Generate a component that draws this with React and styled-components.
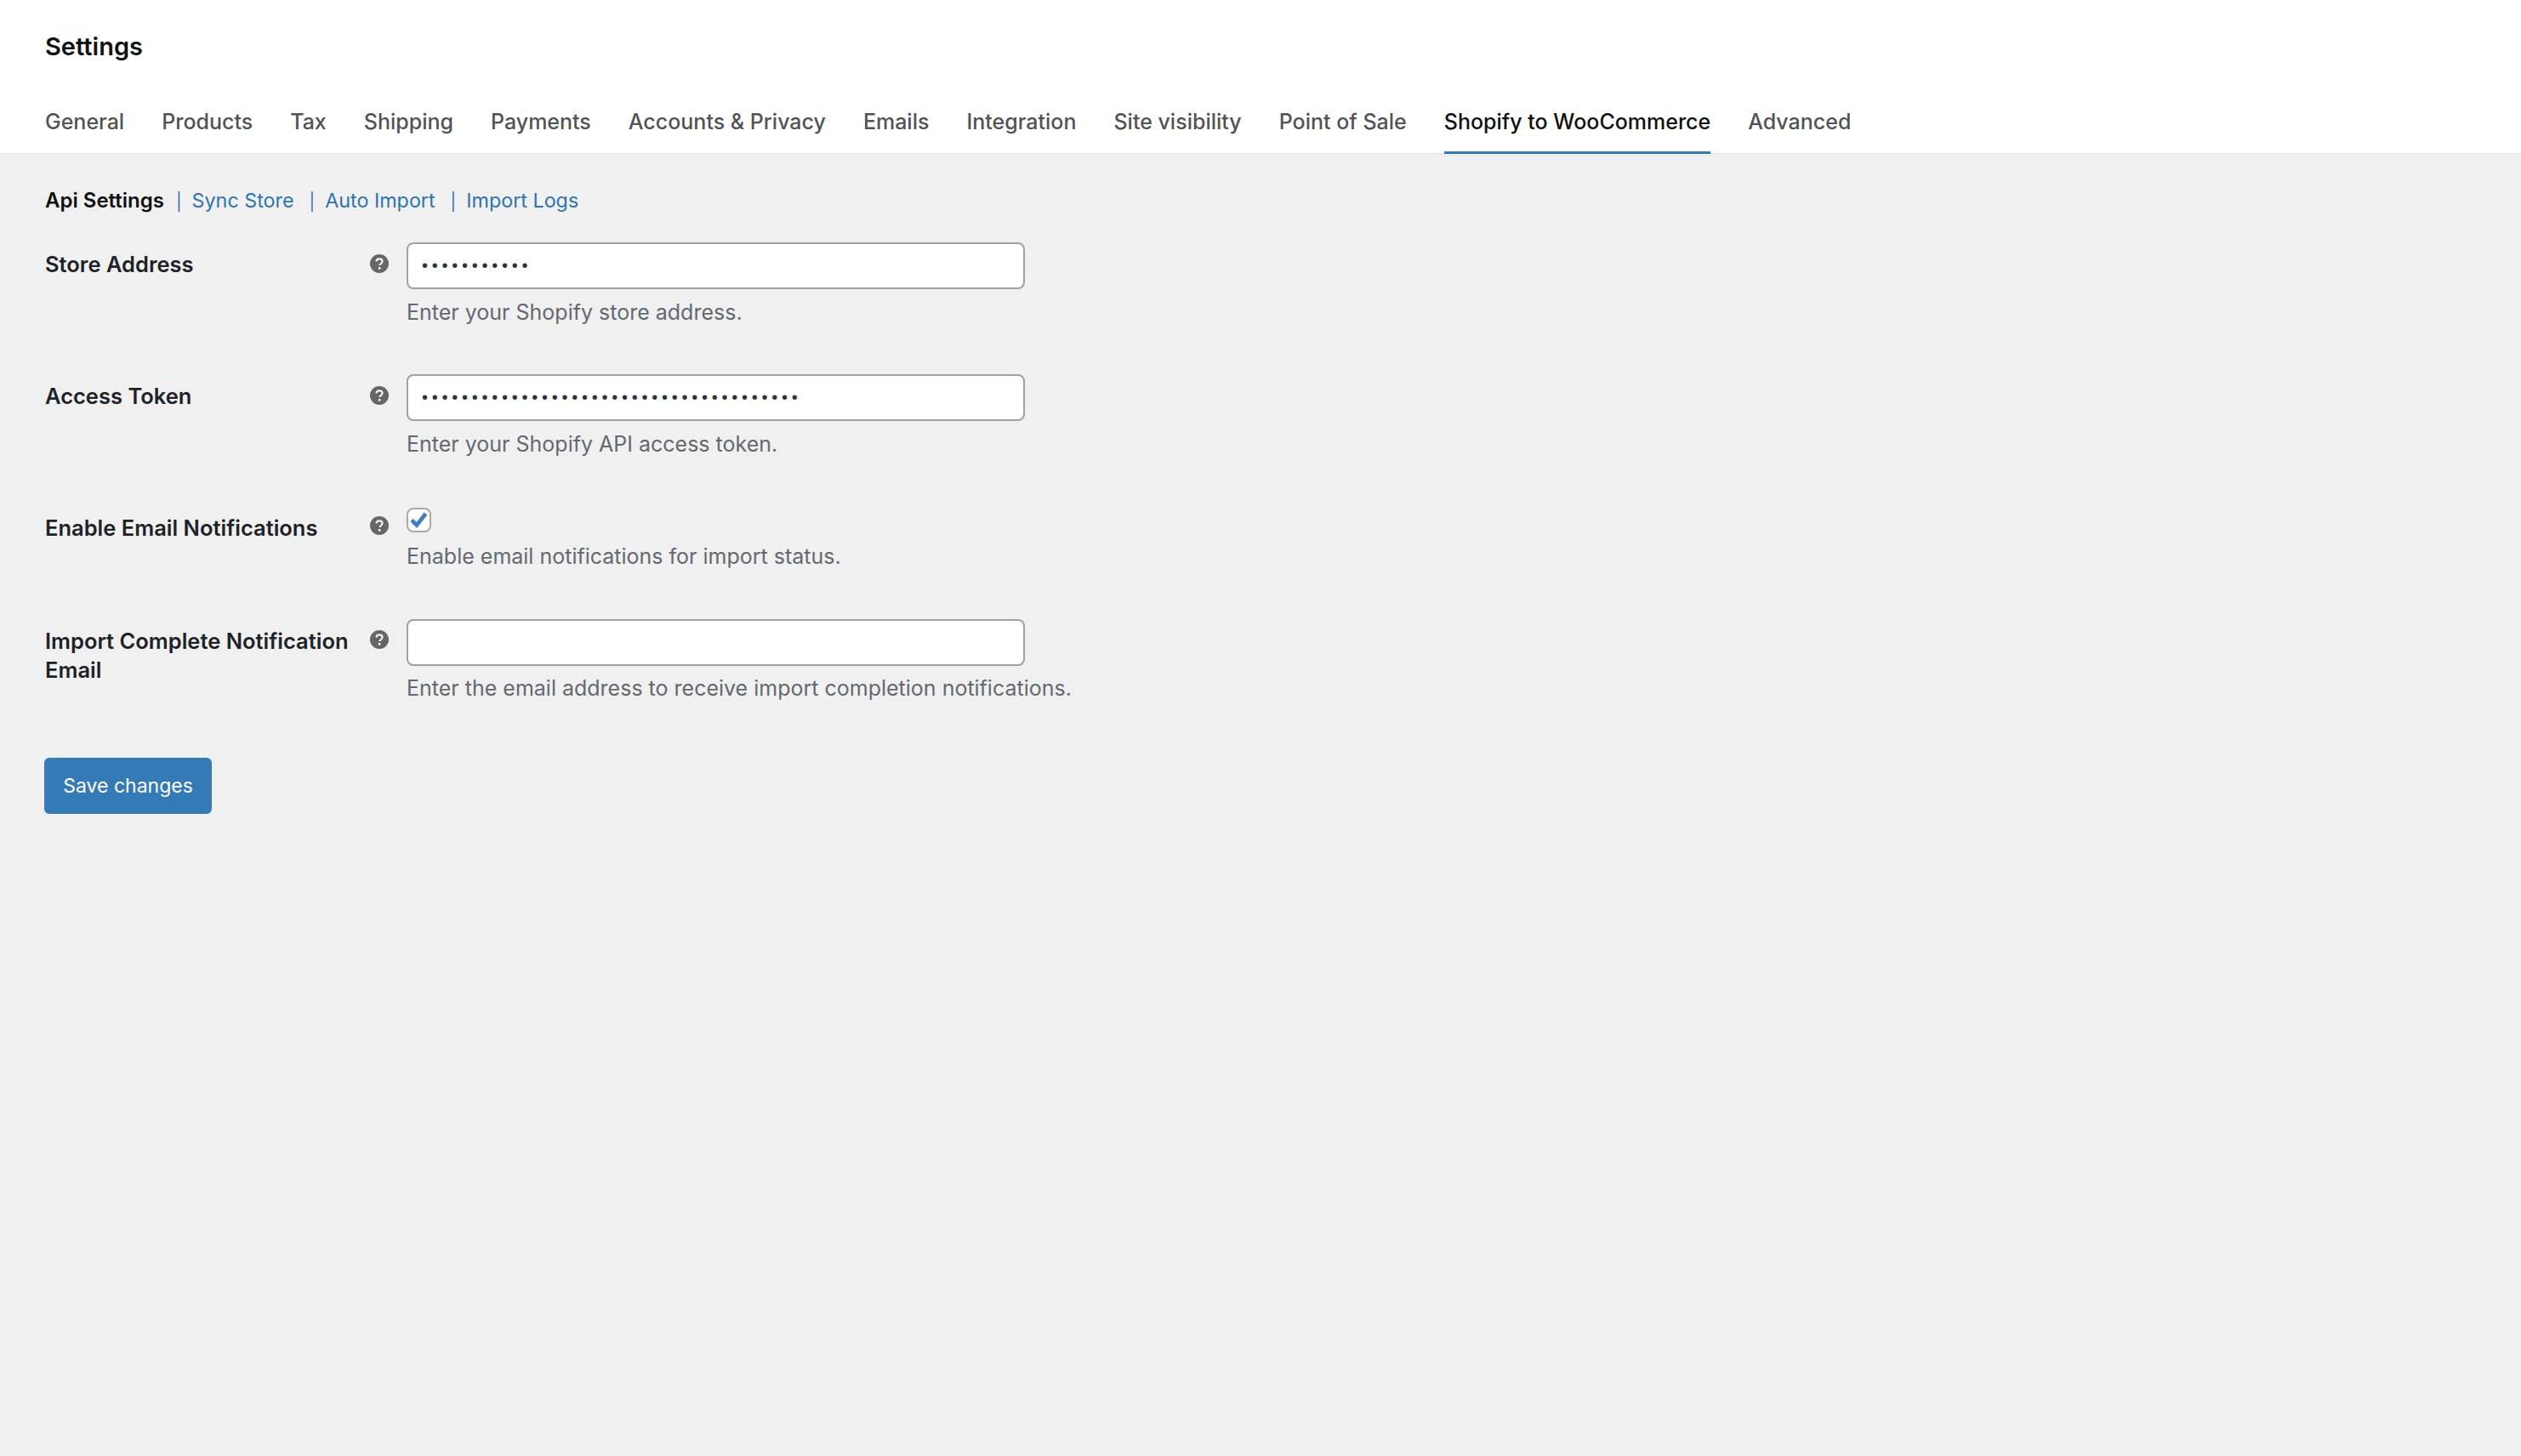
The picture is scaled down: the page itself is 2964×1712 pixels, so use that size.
import styled, { createGlobalStyle } from "styled-components";

const tabs = [
  "General",
  "Products",
  "Tax",
  "Shipping",
  "Payments",
  "Accounts & Privacy",
  "Emails",
  "Integration",
  "Site visibility",
  "Point of Sale",
  "Shopify to WooCommerce",
  "Advanced",
];

const subLinks = ["Sync Store", "Auto Import", "Import Logs"];

const GlobalStyle = createGlobalStyle`
  html, body {
    margin: 0;
    padding: 0;
    background: #f0f0f1;
  }
  * {
    box-sizing: border-box;
  }
  body {
    font-family: Inter, "Liberation Sans", sans-serif;
    -webkit-font-smoothing: antialiased;
  }
`;

const Page = styled.div`
  min-height: 1712px;
  background: #f0f0f1;
`;

const Header = styled.header`
  background: #fff;
  height: 181px;
  padding: 0 53px;
  border-bottom: 1px solid #e6e6e7;
  display: flex;
  flex-direction: column;
`;

const Title = styled.h1`
  margin: 0;
  padding-top: 37px;
  font-size: 29px;
  line-height: 36px;
  font-weight: 600;
  color: #101010;
`;

const TabBar = styled.nav`
  display: flex;
  gap: 44px;
  margin-top: 33px;
`;

const Tab = styled.a`
  display: block;
  height: 75px;
  padding-top: 19px;
  font-size: 25px;
  line-height: 36px;
  font-weight: 500;
  color: ${({ $active }) => ($active ? "#101010" : "#515356")};
  border-bottom: 3px solid ${({ $active }) => ($active ? "#337ab7" : "transparent")};
`;

const Content = styled.main`
  padding: 39px 52px 0 53px;
`;

const SubNav = styled.div`
  display: flex;
  align-items: center;
  height: 32px;
  font-size: 23.3px;
  line-height: 32px;
`;

const SubCurrent = styled.span`
  font-size: 24px;
  font-weight: 600;
  color: #101010;
`;

const SubLink = styled.a`
  color: #2f74ad;
`;

const SubSep = styled.span`
  color: #2f74ad;
  font-size: 20px;
  margin: 0 12px 0 ${({ $first }) => ($first ? 14 : 18)}px;
`;

const Form = styled.form`
  margin-top: 33px;
`;

const Row = styled.div`
  display: grid;
  grid-template-columns: 425px 1fr;
  height: ${({ $height }) => $height}px;
`;

const LabelCell = styled.div`
  display: flex;
  align-items: flex-start;
`;

const Label = styled.label`
  width: 382px;
  padding-top: ${({ $top }) => $top}px;
  font-size: 25.5px;
  line-height: 34px;
  font-weight: 600;
  color: #1d2327;
`;

const HelpIcon = styled.svg`
  width: 22px;
  height: 22px;
  flex: none;
  margin-top: ${({ $top }) => $top}px;
`;

const TextInput = styled.input`
  display: block;
  width: 727px;
  height: 55px;
  padding: 0 16px;
  border: 2px solid #9fa1a5;
  border-radius: 8px;
  background: #fff;
  color: #2c3338;
  font-family: "Liberation Sans", sans-serif;
  font-size: 20px;
  letter-spacing: 4.75px;
  outline: none;
`;

const CheckBox = styled.span`
  display: flex;
  align-items: center;
  justify-content: center;
  width: 29px;
  height: 29px;
  border: 2px solid #a7a9ad;
  border-radius: 8px;
  background: #fff;
`;

const Description = styled.p`
  margin: ${({ $top }) => $top}px 0 0;
  font-size: 25px;
  line-height: 34px;
  color: #646970;
`;

const SaveButton = styled.button`
  display: block;
  width: 197px;
  height: 66px;
  margin: 13px 0 0 -1px;
  padding: 0;
  border: 0;
  border-radius: 6px;
  background: #337ab7;
  color: #fff;
  font-family: inherit;
  font-size: 23px;
`;

const Help = ({ top }) => (
  <HelpIcon $top={top} viewBox="0 0 22 22" aria-hidden="true">
    <circle cx="11" cy="11" r="11" fill="#666" />
    <path
      d="M7.6 8.6c0-2 1.5-3.2 3.5-3.2s3.4 1.1 3.4 2.9c0 1.4-.8 2.1-1.8 2.8-.9.6-1.2 1-1.2 2"
      fill="none"
      stroke="#f0f0f1"
      strokeWidth="2.3"
    />
    <rect x="9.9" y="15" width="2.6" height="2.6" fill="#f0f0f1" />
  </HelpIcon>
);

export default function App() {
  return (
    <Page>
      <GlobalStyle />
      <Header>
        <Title>Settings</Title>
        <TabBar>
          {tabs.map((tab) => (
            <Tab key={tab} $active={tab === "Shopify to WooCommerce"}>
              {tab}
            </Tab>
          ))}
        </TabBar>
      </Header>
      <Content>
        <SubNav>
          <SubCurrent>Api Settings</SubCurrent>
          {subLinks.map((link, i) => (
            <span key={link}>
              <SubSep $first={i === 0}>|</SubSep>
              <SubLink>{link}</SubLink>
            </span>
          ))}
        </SubNav>
        <Form>
          <Row $height={155}>
            <LabelCell>
              <Label $top={9}>Store Address</Label>
              <Help top={14} />
            </LabelCell>
            <div>
              <TextInput type="password" readOnly value="myshopifyxx" />
              <Description $top={10}>Enter your Shopify store address.</Description>
            </div>
          </Row>
          <Row $height={157}>
            <LabelCell>
              <Label $top={9}>Access Token</Label>
              <Help top={14} />
            </LabelCell>
            <div>
              <TextInput type="password" readOnly value="shpat_0123456789abcdef0123456789abcdef" />
              <Description $top={10}>Enter your Shopify API access token.</Description>
            </div>
          </Row>
          <Row $height={131}>
            <LabelCell>
              <Label $top={7}>Enable Email Notifications</Label>
              <Help top={10} />
            </LabelCell>
            <div>
              <CheckBox role="checkbox" aria-checked="true">
                <svg width="21" height="19" viewBox="0 0 21 19" aria-hidden="true">
                  <path d="M2 9.5l6 6L18.5 2" fill="none" stroke="#3f7fc1" strokeWidth="4.6" />
                </svg>
              </CheckBox>
              <Description $top={11}>Enable email notifications for import status.</Description>
            </div>
          </Row>
          <Row $height={150}>
            <LabelCell>
              <Label $top={9}>Import Complete Notification Email</Label>
              <Help top={13} />
            </LabelCell>
            <div>
              <TextInput type="text" readOnly value="" />
              <Description $top={9}>Enter the email address to receive import completion notifications.</Description>
            </div>
          </Row>
          <SaveButton type="button">Save changes</SaveButton>
        </Form>
      </Content>
    </Page>
  );
}
